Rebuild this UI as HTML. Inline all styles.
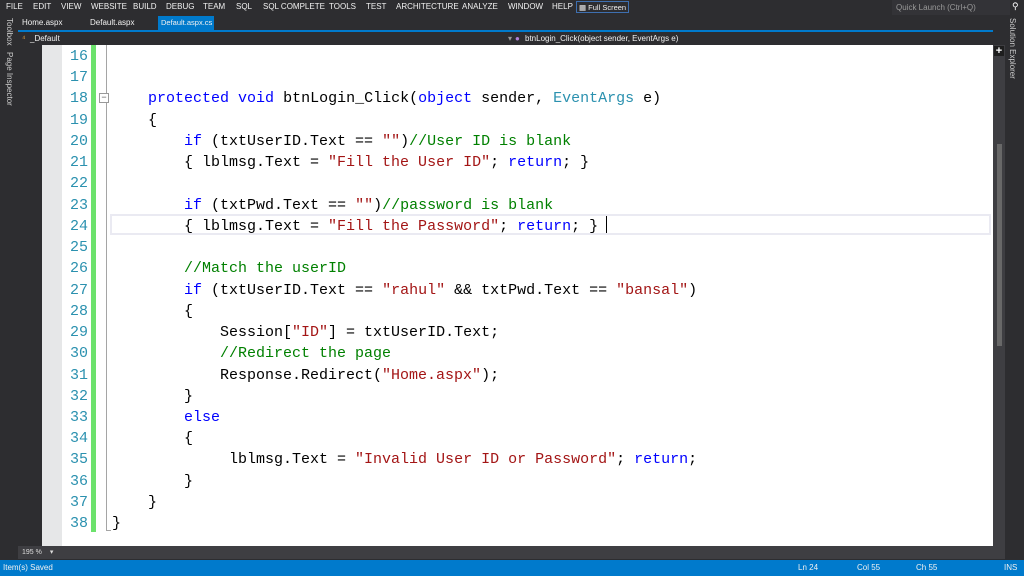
<!DOCTYPE html>
<html><head><style>
*{margin:0;padding:0;box-sizing:border-box}
body{width:1024px;height:576px;background:#2d2d30;position:relative;overflow:hidden;font-family:"Liberation Sans",sans-serif;color:#f1f1f1}
.abs{position:absolute;white-space:nowrap}
.menu{top:0;left:0;height:14px;font-size:8px;line-height:14px}
.menu span{position:absolute;top:0;white-space:nowrap}
.code{font-family:"Liberation Mono",monospace;font-size:15px;white-space:pre;color:#000}
.k{color:#0000ff}.s{color:#a31515}.c{color:#008000}.t{color:#2b91af}
.vt{writing-mode:vertical-rl;font-size:8px;color:#ccc}
</style></head><body>
<div class="abs menu">
<span style="left:6px">FILE</span><span style="left:33px">EDIT</span><span style="left:61px">VIEW</span><span style="left:91px">WEBSITE</span><span style="left:133px">BUILD</span><span style="left:166px">DEBUG</span><span style="left:203px">TEAM</span><span style="left:236px">SQL</span><span style="left:263px">SQL COMPLETE</span><span style="left:329px">TOOLS</span><span style="left:366px">TEST</span><span style="left:396px">ARCHITECTURE</span><span style="left:462px">ANALYZE</span><span style="left:508px">WINDOW</span><span style="left:552px">HELP</span>
<span style="left:576px;top:1px;height:12px;line-height:11px;border:1px solid #3e6fb0;padding:0 2px;font-size:7.5px">▦ Full Screen</span>
</div>
<div class="abs" style="left:892px;top:0;width:118px;height:15px;background:#333337;font-size:8px;line-height:15px;padding-left:4px;color:#999">Quick Launch (Ctrl+Q)</div>
<div class="abs" style="left:1012px;top:1px;font-size:9px;color:#fff">⚲</div>
<div class="abs vt" style="left:5px;top:18px">Toolbox</div>
<div class="abs vt" style="left:5px;top:52px">Page Inspector</div>
<div class="abs vt" style="left:1008px;top:18px">Solution Explorer</div>
<div class="abs" style="left:22px;top:16px;font-size:8px;line-height:14px">Home.aspx</div>
<div class="abs" style="left:90px;top:16px;font-size:8px;line-height:14px">Default.aspx</div>
<div class="abs" style="left:158px;top:16px;width:56px;height:15px;background:#007acc;font-size:7.5px;line-height:14px;padding-left:3px;overflow:hidden">Default.aspx.cs <span style="font-size:7px">⊕ ✕</span></div>
<div class="abs" style="left:18px;top:30px;width:975px;height:2px;background:#007acc"></div>
<div class="abs" style="left:18px;top:32px;width:975px;height:13px;background:#2d2d30;font-size:8px;line-height:13px"><span class="abs" style="left:4px;color:#e8a33d">⁴</span><span class="abs" style="left:12px">_Default</span><span class="abs" style="left:490px;color:#999">▾</span><span class="abs" style="left:497px;color:#b180d7">●</span><span class="abs" style="left:507px">btnLogin_Click(object sender, EventArgs e)</span></div>
<div class="abs" style="left:42px;top:45px;width:951px;height:501px;background:#fff"></div>
<div class="abs" style="left:42px;top:45px;width:20px;height:501px;background:#e6e7e8"></div>
<div class="abs" style="left:91px;top:45px;width:5px;height:487px;background:#6ce26c"></div>
<div class="abs" style="left:106px;top:45px;width:1px;height:486px;background:#a5a5a5"></div>
<div class="abs" style="left:99px;top:93px;width:10px;height:10px;border:1px solid #999;background:#fff;font-size:9px;line-height:7px;text-align:center;color:#555">−</div>
<div class="abs" style="left:110px;top:214px;width:881px;height:21px;border:2px solid #eaeaf2"></div>
<div class="abs" style="left:606px;top:216px;width:1px;height:17px;background:#000"></div>
<div class="abs" style="left:106px;top:530px;width:5px;height:1px;background:#a5a5a5"></div>
<div class="abs code" style="left:112px;top:46px;line-height:21.23px">

    <span class="k">protected</span> <span class="k">void</span> btnLogin_Click(<span class="k">object</span> sender, <span class="t">EventArgs</span> e)
    {
        <span class="k">if</span> (txtUserID.Text == <span class="s">""</span>)<span class="c">//User ID is blank</span>
        { lblmsg.Text = <span class="s">"Fill the User ID"</span>; <span class="k">return</span>; }

        <span class="k">if</span> (txtPwd.Text == <span class="s">""</span>)<span class="c">//password is blank</span>
        { lblmsg.Text = <span class="s">"Fill the Password"</span>; <span class="k">return</span>; }

        <span class="c">//Match the userID</span>
        <span class="k">if</span> (txtUserID.Text == <span class="s">"rahul"</span> &amp;&amp; txtPwd.Text == <span class="s">"bansal"</span>)
        {
            Session[<span class="s">"ID"</span>] = txtUserID.Text;
            <span class="c">//Redirect the page</span>
            Response.Redirect(<span class="s">"Home.aspx"</span>);
        }
        <span class="k">else</span>
        {
             lblmsg.Text = <span class="s">"Invalid User ID or Password"</span>; <span class="k">return</span>;
        }
    }
}</div>
<div class="abs code" style="left:42px;top:46px;width:46px;text-align:right;line-height:21.23px;color:#2b91af">16
17
18
19
20
21
22
23
24
25
26
27
28
29
30
31
32
33
34
35
36
37
38</div>
<div class="abs" style="left:993px;top:45px;width:12px;height:501px;background:#3e3e42"></div>
<div class="abs" style="left:994px;top:46px;width:10px;height:10px;background:#1e1e1e;color:#fff;font-size:11px;line-height:10px;text-align:center;font-weight:bold">+</div>
<div class="abs" style="left:997px;top:144px;width:5px;height:202px;background:#686868"></div>
<div class="abs" style="left:18px;top:546px;width:987px;height:13px;background:#3e3e42;font-size:7px;line-height:13px;color:#ddd"><span style="margin-left:4px">195 %</span><span style="margin-left:8px">▾</span></div>
<div class="abs" style="left:0;top:560px;width:1024px;height:16px;background:#007acc;font-size:8px;line-height:16px"><span class="abs" style="left:3px">Item(s) Saved</span><span class="abs" style="left:798px">Ln 24</span><span class="abs" style="left:857px">Col 55</span><span class="abs" style="left:916px">Ch 55</span><span class="abs" style="left:1004px">INS</span></div>
</body></html>
